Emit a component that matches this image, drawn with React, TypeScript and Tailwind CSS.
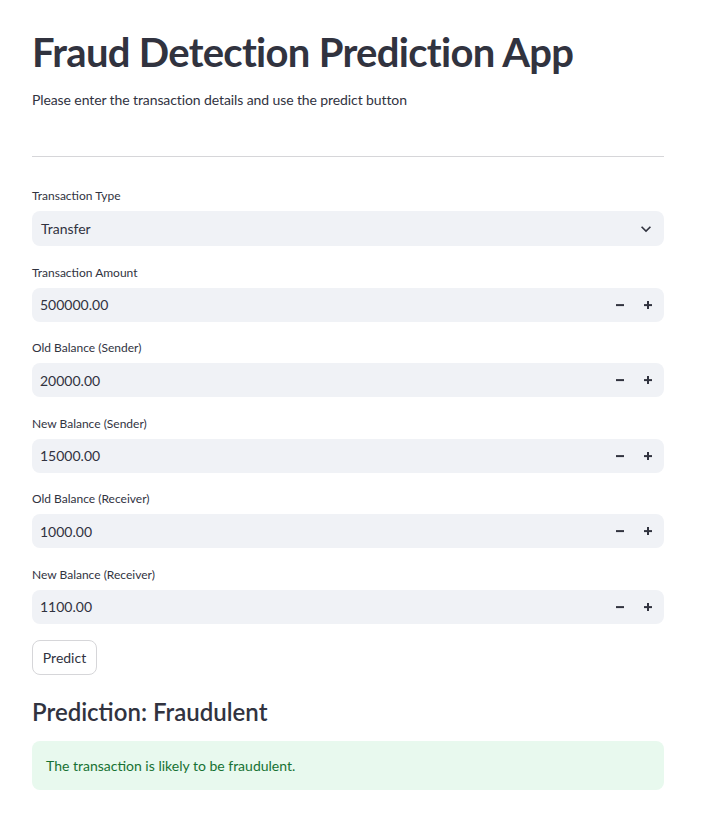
import React from 'react';

const fields = [
  { label: 'Transaction Amount', value: '500000.00' },
  { label: 'Old Balance (Sender)', value: '20000.00' },
  { label: 'New Balance (Sender)', value: '15000.00' },
  { label: 'Old Balance (Receiver)', value: '1000.00' },
  { label: 'New Balance (Receiver)', value: '1100.00' },
];

function Minus() {
  return (
    <svg width="10" height="10" viewBox="0 0 10 10" fill="#31333F">
      <rect x="1" y="4.1" width="8" height="2" />
    </svg>
  );
}

function Plus() {
  return (
    <svg width="10" height="10" viewBox="0 0 10 10" fill="#31333F">
      <rect x="1" y="4.1" width="8" height="2" />
      <rect x="4" y="1" width="2" height="8" />
    </svg>
  );
}

function Chevron() {
  return (
    <svg width="20" height="20" viewBox="0 0 24 24" fill="#31333F">
      <path d="M16.59 8.59L12 13.17 7.41 8.59 6 10l6 6 6-6z" />
    </svg>
  );
}

function Label({ children }: { children: React.ReactNode }) {
  return <div className="h-[24px] flex items-center text-[12px] text-[#31333F] mb-[3px]">{children}</div>;
}

function NumberField({ label, value }: { label: string; value: string }) {
  return (
    <div>
      <Label>{label}</Label>
      <div className="h-[34px] rounded-lg bg-[#f0f2f6] flex items-center pl-[8px] pr-[2px]">
        <span className="flex-1 text-[14px] text-[#31333F]">{value}</span>
        <div className="flex items-center">
          <span className="w-[28px] h-[28px] flex items-center justify-center"><Minus /></span>
          <span className="w-[28px] h-[28px] flex items-center justify-center"><Plus /></span>
        </div>
      </div>
    </div>
  );
}

export default function App() {
  return (
    <div className="min-h-screen bg-white font-[Lato,'Noto_Sans',sans-serif] text-[#31333F]">
      <div className="w-[632px] ml-[32px] pt-[26px]">
        <h1 className="text-[40px] leading-[52px] font-bold tracking-[-0.7px]">Fraud Detection Prediction App</h1>
        <p className="mt-[11px] text-[14px] leading-[22px] tracking-[-0.1px]">Please enter the transaction details and use the predict button</p>
        <hr className="mt-[45px] border-t border-[#d6d6d9]" />

        <div className="mt-[27px] flex flex-col gap-[14.5px]">
          <div>
            <Label>Transaction Type</Label>
            <div className="h-[35px] rounded-lg bg-[#f0f2f6] flex items-center justify-between pl-[9px] pr-[8px]">
              <span className="text-[14px]">Transfer</span>
              <Chevron />
            </div>
          </div>
          {fields.map((f) => (
            <NumberField key={f.label} label={f.label} value={f.value} />
          ))}
        </div>

        <button className="mt-[16px] h-[35px] w-[65px] rounded-lg border border-[#d6d6d9] bg-white text-[14px] text-[#31333F]">
          Predict
        </button>

        <h3 className="mt-[21px] text-[24px] leading-[32px] font-semibold">Prediction: Fraudulent</h3>

        <div className="mt-[13px] h-[49px] rounded-lg bg-[#e8f9ee] flex items-center px-[14px] text-[14px] text-[#177233]">
          The transaction is likely to be fraudulent.
        </div>
      </div>
    </div>
  );
}
